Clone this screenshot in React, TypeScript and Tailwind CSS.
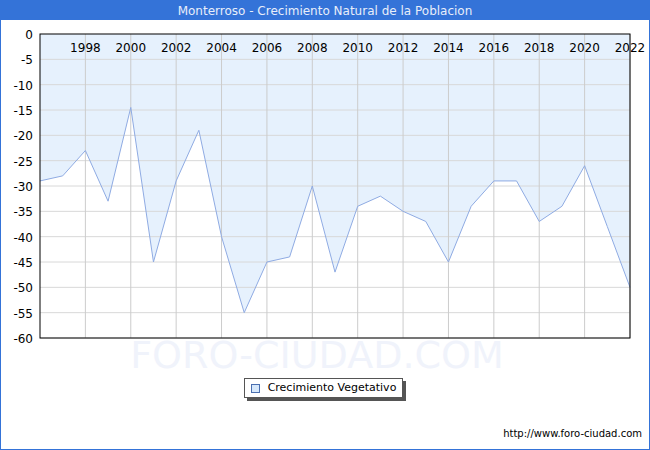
const data = [-29,-28,-23,-33,-14.5,-45,-29,-19,-40,-55,-45,-44,-30,-47,-34,-32,-35,-37,-45,-34,-29,-29,-37,-34,-26,-38,-50];
const X0 = 39, X1 = 629, Y0 = 14, Y1 = 318;
const xs = (i: number) => X0 + (i * (X1 - X0)) / 26;
const ys = (v: number) => Y0 + (-v * (Y1 - Y0)) / 60;

export default function App() {
  const pts = data.map((v, i) => `${xs(i)},${ys(v)}`).join(" ");
  const area = `${X0},${Y0} ${pts} ${X1},${Y0}`;
  const font = { fontFamily: "'DejaVu Sans', Verdana, sans-serif" };
  return (
    <div className="w-[650px] h-[450px] border border-[#3473d8] bg-white flex flex-col" style={font}>
      <div className="h-[19px] bg-[#3473d8] text-[#e8eefa] text-[12px] flex items-center justify-center">Monterroso - Crecimiento Natural de la Poblacion</div>
      <svg width="648" height="350" className="shrink-0">
        <text x="316" y="348" textAnchor="middle" fontSize="38" fill="#f0f3fb">FORO-CIUDAD.COM</text>
        <polygon points={area} fill="#e6f1fd" />
        {Array.from({ length: 12 }, (_, k) => (
          <line key={"h" + k} x1={X0} x2={X1} y1={ys(-5 * (k + 1))} y2={ys(-5 * (k + 1))} stroke="#d8d8d8" />
        ))}
        {Array.from({ length: 13 }, (_, k) => (
          <line key={"v" + k} x1={xs(2 + 2 * k)} x2={xs(2 + 2 * k)} y1={Y0} y2={Y1} stroke="#cccccc" />
        ))}
        <polyline points={pts} fill="none" stroke="#8fabe3" strokeWidth="1" />
        <rect x={X0} y={Y0} width={X1 - X0} height={Y1 - Y0} fill="none" stroke="#000" />
        {Array.from({ length: 13 }, (_, k) => (
          <text key={"y" + k} x={X0 - 7} y={ys(-5 * k) + 5} textAnchor="end" fontSize="12" fill="#000">{k === 0 ? "0" : `-${5 * k}`}</text>
        ))}
        {Array.from({ length: 13 }, (_, k) => (
          <text key={"x" + k} x={xs(2 + 2 * k)} y={Y0 + 18} textAnchor="middle" fontSize="12" fill="#000">{1998 + 2 * k}</text>
        ))}
      </svg>
      <div className="flex justify-center mt-[8px] pr-[3px]">
        <div className="border border-[#555] bg-white shadow-[3px_3px_0_#555] h-[20px] px-[6px] flex items-center gap-[8px] text-[11px] text-black">
          <span className="w-[9px] h-[9px] border border-[#4a6fb0] bg-[#d6e8fb]" />
          <span>Crecimiento Vegetativo</span>
        </div>
      </div>
      <div className="flex-1" />
      <div className="text-right text-[10px] pr-[7px] pb-[8px] text-black">http://www.foro-ciudad.com</div>
    </div>
  );
}
